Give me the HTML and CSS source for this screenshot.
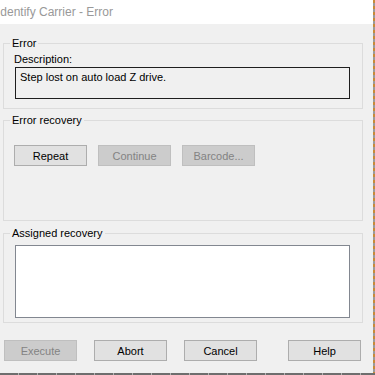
FILE: index.html
```html
<!DOCTYPE html>
<html lang="en">
<head>
    <meta charset="UTF-8">
    <title>Identify Carrier - Error</title>
    <link rel="stylesheet" href="styles.css">
</head>
<body>
    <div class="desktop">
        <div class="dialog">
            <div class="titlebar">
                <span class="title">Identify Carrier - Error</span>
            </div>
            <div class="dialog-body">
                <fieldset class="group">
                    <legend>Error</legend>
                    <div class="label">Description:</div>
                    <div class="description-box">Step lost on auto load Z drive.</div>
                </fieldset>

                <fieldset class="group group-recovery">
                    <legend>Error recovery</legend>
                    <div class="button-row">
                        <button class="btn">Repeat</button>
                        <button class="btn" disabled>Continue</button>
                        <button class="btn" disabled>Barcode...</button>
                    </div>
                </fieldset>

                <fieldset class="group group-assigned">
                    <legend>Assigned recovery</legend>
                    <div class="list-box"></div>
                </fieldset>

                <div class="footer">
                    <button class="btn" disabled>Execute</button>
                    <button class="btn">Abort</button>
                    <button class="btn">Cancel</button>
                    <button class="btn btn-help">Help</button>
                </div>
            </div>
        </div>
    </div>
</body>
</html>
```

FILE: styles.css
```css
body, html {
    margin: 0;
    height: 100%;
    overflow: hidden;
    font-family: 'Liberation Sans', Arial, sans-serif;
    font-size: 11px;
    color: #000;
}

.desktop {
    width: 375px;
    height: 375px;
    background:
        repeating-linear-gradient(180deg, #c88a3a 0px, #c88a3a 3px, #9a9a9a 3px, #9a9a9a 6px) right top / 2px 373px no-repeat,
        repeating-linear-gradient(90deg, #6e6e6e 0px, #6e6e6e 18px, #b4b4b4 18px, #b4b4b4 19px) left bottom / 100% 2px no-repeat,
        #f0f0f0;
}

.dialog {
    width: 373px;
    height: 373px;
    background: #f0f0f0;
    display: flex;
    flex-direction: column;
    overflow: hidden;
}

.titlebar {
    height: 24px;
    background: #fff;
    display: flex;
    align-items: center;
    flex-shrink: 0;
}

.title {
    margin-left: -3px;
    color: #999;
    font-size: 12px;
    line-height: 16px;
    white-space: nowrap;
}

.dialog-body {
    padding: 11px 0 0 3px;
    width: 360px;
}

.group {
    margin: 0 0 3px 0;
    padding: 0 12px 9px 10px;
    border: 1px solid #dcdcdc;
    min-width: 0;
}

.group legend {
    margin-left: -4px;
    padding: 0 2px;
    line-height: 16px;
}

.label {
    line-height: 16px;
}

.description-box {
    margin-left: 1px;
    height: 28px;
    padding: 1px 4px;
    border: 1px solid #1e1e1e;
    line-height: 16px;
}

.group-recovery {
    padding-bottom: 54px;
    margin-bottom: 4px;
}

.button-row {
    display: flex;
    gap: 11px;
    padding-top: 17px;
}

.btn {
    width: 73px;
    height: 21px;
    padding: 0;
    font-family: inherit;
    font-size: 11px;
    color: #000;
    background: #e1e1e1;
    border: 1px solid #adadad;
    border-radius: 0;
}

.btn:disabled {
    color: #838383;
    background: #cccccc;
    border-color: #bfbfbf;
}

.group-assigned {
    margin-bottom: 0;
    padding-bottom: 4px;
}

.list-box {
    margin: 4px 0 0 1px;
    height: 71px;
    background: #fff;
    border: 1px solid #828790;
}

.footer {
    display: flex;
    gap: 17px;
    padding: 17px 2px 0 1px;
}

.btn-help {
    margin-left: auto;
}
```
